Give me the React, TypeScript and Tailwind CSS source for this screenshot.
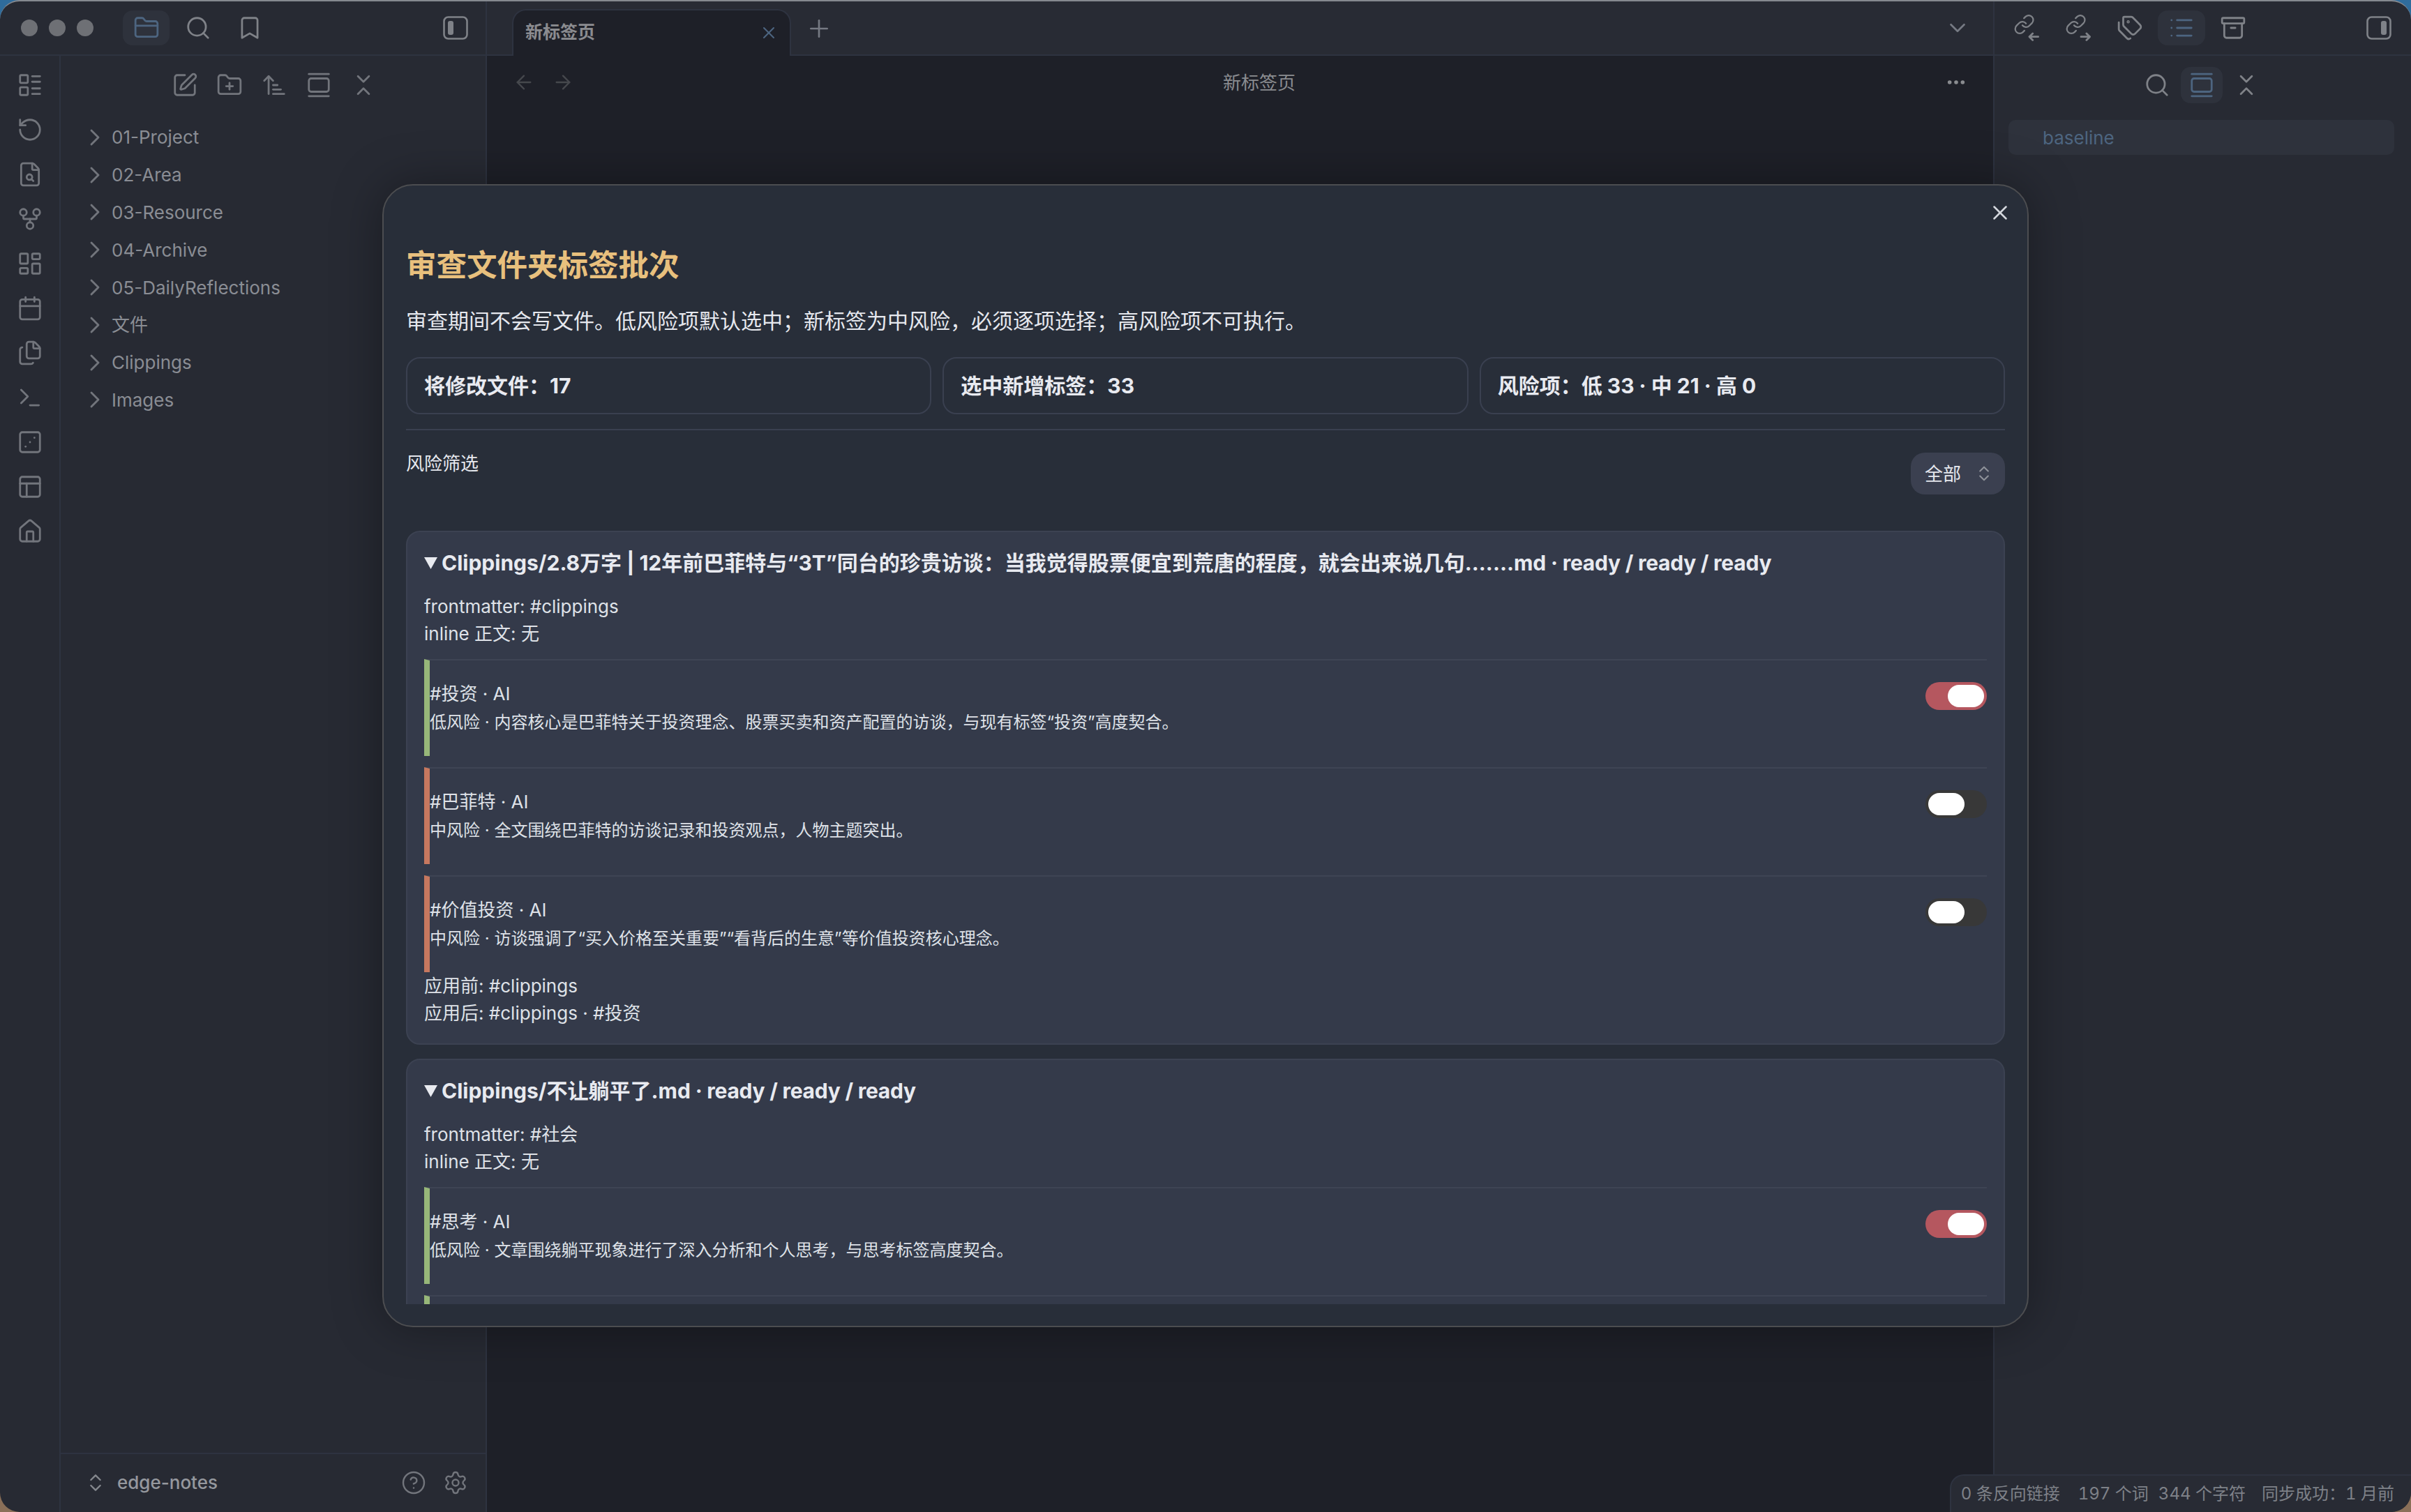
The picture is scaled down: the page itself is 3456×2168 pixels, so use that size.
import {
  Archive,
  ArrowLeft,
  ArrowRight,
  ArrowUpNarrowWide,
  Bookmark,
  Calendar,
  ChevronDown,
  ChevronRight,
  ChevronsDownUp,
  ChevronsUpDown,
  CircleHelp,
  Dice3,
  Ellipsis,
  FileSearch,
  Files,
  FolderClosed,
  FolderPlus,
  GalleryVertical,
  GitFork,
  House,
  LayoutDashboard,
  LayoutList,
  List,
  PanelsTopLeft,
  Plus,
  RotateCcw,
  Search,
  Settings,
  SquarePen,
  Tags,
  Terminal,
  X,
} from "lucide-react";

const ribbonIcons = [LayoutList, RotateCcw, FileSearch, GitFork, LayoutDashboard, Calendar, Files, Terminal, Dice3, PanelsTopLeft, House];
const folders = ["01-Project", "02-Area", "03-Resource", "04-Archive", "05-DailyReflections", "文件", "Clippings", "Images"];

type Tag = { title: string; desc: string; low: boolean; on: boolean };

const firstTags: Tag[] = [
  { title: "#投资 · AI", desc: "低风险 · 内容核心是巴菲特关于投资理念、股票买卖和资产配置的访谈，与现有标签“投资”高度契合。", low: true, on: true },
  { title: "#巴菲特 · AI", desc: "中风险 · 全文围绕巴菲特的访谈记录和投资观点，人物主题突出。", low: false, on: false },
  { title: "#价值投资 · AI", desc: "中风险 · 访谈强调了“买入价格至关重要”“看背后的生意”等价值投资核心理念。", low: false, on: false },
];

const secondTags: Tag[] = [
  { title: "#思考 · AI", desc: "低风险 · 文章围绕躺平现象进行了深入分析和个人思考，与思考标签高度契合。", low: true, on: true },
];

const PanelToggle = ({ right }: { right?: boolean }) => (
  <svg width="36" height="34" viewBox="0 0 36 34" fill="none">
    <rect x="1.5" y="1.5" width="33" height="31" rx="6" stroke="#7f8288" strokeWidth="2.6" />
    <rect x={right ? 21 : 7} y="7" width="8" height="20" rx="3" fill="#7f8288" />
  </svg>
);

const LinkArrow = ({ out }: { out?: boolean }) => (
  <svg width="38" height="38" viewBox="0 0 24 24" fill="none" stroke="#7f8288" strokeWidth="1.75" strokeLinecap="round" strokeLinejoin="round">
    <g transform="translate(0 -1) scale(0.82)">
      <path d="M10 13a5 5 0 0 0 7.54.54l3-3a5 5 0 0 0-7.07-7.07l-1.72 1.71" />
      <path d="M14 11a5 5 0 0 0-7.54-.54l-3 3a5 5 0 0 0 7.07 7.07l1.71-1.71" />
    </g>
    {out ? <path d="M14.5 20h8m-3-3 3 3-3 3" /> : <path d="M22.5 20h-8m3-3-3 3 3 3" />}
  </svg>
);

const Toggle = ({ on }: { on: boolean }) => (
  <div className={`flex h-[40px] w-[88px] shrink-0 items-center rounded-full px-[4px] ${on ? "justify-end bg-[#b5575f]" : "justify-start bg-[#383838]"}`}>
    <div className="h-[32px] w-[52px] rounded-full bg-white" />
  </div>
);

const TagRow = ({ tag }: { tag: Tag }) => (
  <div className={`flex h-[139px] justify-between border-t-2 border-l-[8px] border-t-[#3e4454] ${tag.low ? "border-l-[#97b779]" : "border-l-[#c7785f]"}`}>
    <div>
      <div className="mt-[28px] text-[26px] leading-[39px]">{tag.title}</div>
      <div className="mt-[4px] text-[24px] leading-[36px]">{tag.desc}</div>
    </div>
    <div className="mt-[31px]">
      <Toggle on={tag.on} />
    </div>
  </div>
);

const FileCard = ({ heading, frontmatter, tags, children }: { heading: string; frontmatter: string; tags: Tag[]; children?: React.ReactNode }) => (
  <div className="shrink-0 rounded-[20px] border-2 border-[#3c4252] bg-[#343a4a] px-[24px] pt-[22px] pb-[24px] text-[#dfe2e8]">
    <div className="flex items-center gap-[6px] text-[30px] leading-[45px] font-bold whitespace-pre text-[#e8eaf0]">
      <svg width="19" height="17" viewBox="0 0 19 17" className="shrink-0">
        <polygon points="0,0 19,0 9.5,17" fill="#e8eaf0" />
      </svg>
      <span>
        {heading}
        <span className="tracking-[-0.25px]"> · ready / ready / ready</span>
      </span>
    </div>
    <div className="mt-[20px] text-[26px] leading-[39px]">frontmatter: {frontmatter}</div>
    <div className="mb-[17px] text-[26px] leading-[39px]">inline 正文: 无</div>
    <div className="flex flex-col gap-[16px]">
      {tags.map((t) => (
        <TagRow key={t.title} tag={t} />
      ))}
    </div>
    {children}
  </div>
);

export default function App() {
  return (
    <div className="relative h-[2168px] w-[3456px] overflow-hidden bg-[linear-gradient(to_bottom,#2f6c9c_50%,#8a6f58_50%)] font-['Inter','Noto_Sans_CJK_SC',sans-serif]">
      <div className="flex h-full w-full overflow-hidden rounded-[28px] border-t-2 border-[#85898f] bg-[#272a33]">
        {/* left */}
        <div className="flex w-[698px] shrink-0 flex-col border-r-2 border-[#2e3340]">
          <div className="flex h-[78px] items-center border-b-2 border-[#2e3340] pl-[30px] pr-[25px]">
            <div className="flex gap-[16px]">
              <div className="h-[24px] w-[24px] rounded-full bg-[#6e7075]" />
              <div className="h-[24px] w-[24px] rounded-full bg-[#6e7075]" />
              <div className="h-[24px] w-[24px] rounded-full bg-[#6e7075]" />
            </div>
            <div className="ml-[42px] flex gap-[7px]">
              <div className="flex h-[50px] w-[67px] items-center justify-center rounded-[14px] bg-[#2e323c]">
                <FolderClosed size={38} strokeWidth={1.75} color="#4d6580" />
              </div>
              <div className="flex h-[50px] w-[67px] items-center justify-center">
                <Search size={38} strokeWidth={1.75} color="#7f8288" />
              </div>
              <div className="flex h-[50px] w-[67px] items-center justify-center">
                <Bookmark size={38} strokeWidth={1.75} color="#7f8288" />
              </div>
            </div>
            <div className="ml-auto">
              <PanelToggle />
            </div>
          </div>
          <div className="flex flex-1">
            <div className="flex w-[87px] shrink-0 flex-col items-center gap-[26px] border-r-2 border-[#2e3340] pt-[23px]">
              {ribbonIcons.map((Icon, i) => (
                <Icon key={i} size={38} strokeWidth={1.75} color="#72757c" />
              ))}
            </div>
            <div className="flex flex-1 flex-col">
              <div className="flex h-[84px] items-center justify-center gap-[26px] pl-[3px]">
                <SquarePen size={38} strokeWidth={1.75} color="#72757c" />
                <FolderPlus size={38} strokeWidth={1.75} color="#72757c" />
                <ArrowUpNarrowWide size={38} strokeWidth={1.75} color="#72757c" />
                <GalleryVertical size={38} strokeWidth={1.75} color="#72757c" />
                <ChevronsDownUp size={38} strokeWidth={1.75} color="#72757c" />
              </div>
              <div className="flex-1 pt-[6px]">
                {folders.map((name) => (
                  <div key={name} className="flex h-[53.8px] items-center gap-[4px] pl-[29px] text-[26px] text-[#8a8d94]">
                    <ChevronRight size={40} strokeWidth={1.7} color="#72757c" />
                    <span>{name}</span>
                  </div>
                ))}
              </div>
              <div className="flex h-[85px] items-center border-t-2 border-[#2e3340] pl-[34px] pr-[25px] pb-[2px]">
                <ChevronsUpDown size={32} strokeWidth={1.75} color="#85888e" />
                <span className="ml-[15px] text-[26px] font-medium text-[#95989e]">edge-notes</span>
                <div className="ml-auto flex items-center gap-[24px]">
                  <CircleHelp size={36} strokeWidth={1.6} color="#72757c" />
                  <Settings size={36} strokeWidth={1.6} color="#72757c" />
                </div>
              </div>
            </div>
          </div>
        </div>

        {/* main */}
        <div className="flex min-w-0 flex-1 flex-col bg-[#1e2028]">
          <div className="flex h-[78px] items-end border-b-2 border-[#2e3340] bg-[#282b34]">
            <div className="relative -mb-[2px] ml-[36px] flex h-[67px] w-[400px] items-center justify-between rounded-t-[20px] border-2 border-b-0 border-[#2e3340] bg-[#1e2028] pb-[2px] pl-[17px] pr-[16px]">
              <span className="text-[25px] font-semibold text-[#8b8c90]">新标签页</span>
              <X size={28} strokeWidth={1.75} color="#4d6580" />
            </div>
            <div className="mb-[17px] ml-[20px]">
              <Plus size={40} strokeWidth={1.6} color="#767a83" />
            </div>
            <div className="mb-[19px] ml-auto mr-[32px]">
              <ChevronDown size={38} strokeWidth={1.7} color="#767a83" />
            </div>
          </div>
          <div className="flex h-[76px] items-center">
            <div className="flex w-[150px] shrink-0 gap-[24px] pl-[37px]">
              <ArrowLeft size={32} strokeWidth={1.75} color="#46484d" />
              <ArrowRight size={32} strokeWidth={1.75} color="#46484d" />
            </div>
            <div className="flex-1 text-center text-[26px] text-[#8a8c90]">新标签页</div>
            <div className="flex w-[95px] shrink-0 justify-end pr-[37px]">
              <Ellipsis size={32} strokeWidth={2.2} color="#8a8c90" />
            </div>
          </div>
        </div>

        {/* right */}
        <div className="flex w-[599px] shrink-0 flex-col border-l-2 border-[#2e3340]">
          <div className="flex h-[78px] items-center gap-[6px] border-b-2 border-[#2e3340] pl-[12px] pr-[28px]">
            <div className="flex h-[50px] w-[68px] items-center justify-center">
              <LinkArrow />
            </div>
            <div className="flex h-[50px] w-[68px] items-center justify-center">
              <LinkArrow out />
            </div>
            <div className="flex h-[50px] w-[68px] items-center justify-center">
              <Tags size={38} strokeWidth={1.75} color="#7f8288" />
            </div>
            <div className="flex h-[50px] w-[68px] items-center justify-center rounded-[14px] bg-[#2e323c]">
              <List size={38} strokeWidth={1.75} color="#4d6580" />
            </div>
            <div className="flex h-[50px] w-[68px] items-center justify-center">
              <Archive size={38} strokeWidth={1.75} color="#7f8288" />
            </div>
            <div className="ml-auto">
              <PanelToggle right />
            </div>
          </div>
          <div className="flex h-[84px] items-center justify-center gap-[4px] pr-[3px]">
            <div className="flex h-[52px] w-[60px] items-center justify-center">
              <Search size={38} strokeWidth={1.75} color="#7f8288" />
            </div>
            <div className="flex h-[52px] w-[60px] items-center justify-center rounded-[14px] bg-[#2e323c]">
              <GalleryVertical size={38} strokeWidth={1.75} color="#4d6580" />
            </div>
            <div className="flex h-[52px] w-[60px] items-center justify-center">
              <ChevronsDownUp size={38} strokeWidth={1.75} color="#7f8288" />
            </div>
          </div>
          <div className="mt-[8px] mr-[24px] ml-[20px] flex h-[50px] items-center rounded-[10px] bg-[#2e323c] pl-[49px] text-[26px] text-[#4d6580]">baseline</div>
        </div>
      </div>

      {/* status bar */}
      <div className="absolute right-0 bottom-0 flex h-[54px] w-[661px] items-center justify-end rounded-tl-[20px] rounded-br-[28px] border-t-2 border-l-2 border-[#2e3340] bg-[#282b34] pr-[24px] text-[24px] whitespace-nowrap text-[#7e8188] tabular-nums">
        <span>0 条反向链接</span>
        <span className="ml-[26px]">197 个词</span>
        <span className="ml-[14px]">344 个字符</span>
        <span className="ml-[23px]">同步成功：1 月前</span>
      </div>

      {/* modal */}
      <div className="absolute top-[264px] left-[548px] flex h-[1639px] w-[2360px] flex-col rounded-[44px] border-2 border-[#4c4d50] bg-[#282e39] px-[32px] shadow-[0_0_70px_rgba(0,0,0,0.35)]">
        <button className="absolute top-[22px] right-[22px]">
          <X size={34} strokeWidth={1.75} color="#d5d8de" />
        </button>
        <div className="mt-[83px] text-[43.5px] leading-[62px] font-bold text-[#e8c07d]">审查文件夹标签批次</div>
        <div className="mt-[26px] text-[30px] leading-[46px] text-[#e6e8ee]">审查期间不会写文件。低风险项默认选中；新标签为中风险，必须逐项选择；高风险项不可执行。</div>
        <div className="mt-[29px] grid grid-cols-3 gap-[16px]">
          {["将修改文件：17", "选中新增标签：33", "风险项：低 33 · 中 21 · 高 0"].map((s) => (
            <div key={s} className="flex h-[82px] items-center rounded-[20px] border-2 border-[#3a4050] px-[24px] text-[30px] font-bold text-[#e8eaf0]">
              {s}
            </div>
          ))}
        </div>
        <div className="mt-[21px] h-[2px] bg-[#3a4050]" />
        <div className="mt-[28px] flex items-start justify-between">
          <div className="text-[26px] leading-[39px] text-[#e6e8ee]">风险筛选</div>
          <div className="mt-[4px] flex h-[60px] w-[135px] items-center justify-between rounded-[20px] bg-[#3b4050] pl-[20px] pr-[16px] text-[26px] text-[#e6e8ee]">
            <span>全部</span>
            <ChevronsUpDown size={28} strokeWidth={1.75} color="#8f929a" />
          </div>
        </div>
        <div className="mt-[52px] mb-[31px] flex min-h-0 flex-1 flex-col gap-[20px] overflow-hidden">
          <FileCard heading="Clippings/2.8万字 | 12年前巴菲特与“3T”同台的珍贵访谈：当我觉得股票便宜到荒唐的程度，就会出来说几句.......md" frontmatter="#clippings" tags={firstTags}>
            <div className="text-[26px] leading-[39px]">应用前: #clippings</div>
            <div className="text-[26px] leading-[39px]">应用后: #clippings · #投资</div>
          </FileCard>
          <FileCard heading="Clippings/不让躺平了.md" frontmatter="#社会" tags={secondTags}>
            <div className="mt-[16px] h-[139px] border-t-2 border-l-[8px] border-t-[#3e4454] border-l-[#97b779]" />
          </FileCard>
        </div>
      </div>
    </div>
  );
}
